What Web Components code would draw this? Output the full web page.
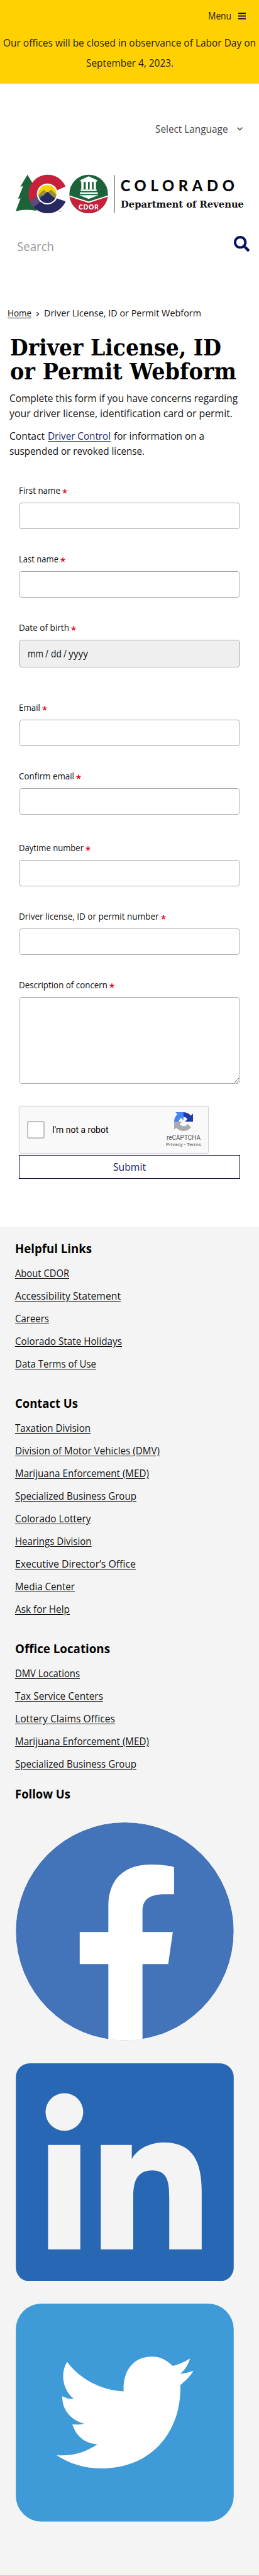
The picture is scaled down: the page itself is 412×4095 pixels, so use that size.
<!DOCTYPE html>
<html lang="en">
<head>
<meta charset="utf-8">
<title>Driver License, ID or Permit Webform</title>
<style>
body{margin:0;background:#fff;color:#111;font:16px/24px "Open Sans","Noto Sans",sans-serif}
main{display:block}
</style>
</head>
<body>
<site-banner></site-banner>
<site-header></site-header>
<main>
<page-intro></page-intro>
<contact-form></contact-form>
</main>
<site-footer>
<link-group heading="Helpful Links" width="122" links="About CDOR:86|Accessibility Statement:168|Careers:54|Colorado State Holidays:170|Data Terms of Use:129"></link-group>
<link-group heading="Contact Us" width="100" links="Taxation Division:120|Division of Motor Vehicles (DMV):230|Marijuana Enforcement (MED):213|Specialized Business Group:193|Colorado Lottery:120.5|Hearings Division:121.5|Executive Director’s Office:192|Media Center:95|Ask for Help:87"></link-group>
<link-group heading="Office Locations" width="151" links="DMV Locations:103|Tax Service Centers:140|Lottery Claims Offices:159|Marijuana Enforcement (MED):213|Specialized Business Group:193"></link-group>
<social-links></social-links>
</site-footer>
<script>
const define = (name, html) => customElements.define(name, class extends HTMLElement {
  constructor() { super(); this.attachShadow({mode: 'open'}).innerHTML = html; }
});

define('site-banner', `<style>
:host{display:block;box-sizing:border-box;height:133px;background:#ffd100;padding-top:13px;color:#2b1a14}
.menu{display:flex;justify-content:flex-end;align-items:center;gap:11px;padding-right:21px;height:24px;margin-bottom:15px}
.msg{display:flex;flex-direction:column;align-items:center;line-height:32px}
</style>
<div class="menu"><fit-text w="37">Menu</fit-text><svg width="12" height="11" viewBox="0 0 12 11"><path d="M0 1.2h12M0 5.5h12M0 9.8h12" stroke="#1b1440" stroke-width="1.9"/></svg></div>
<div class="msg"><fit-text w="402">Our offices will be closed in observance of Labor Day on</fit-text><fit-text w="139">September 4, 2023.</fit-text></div>`);

define('state-logo', `<style>:host{display:block;height:62px}svg{display:block}</style>
<svg width="364" height="62" viewBox="75 831 1092 186" role="img" aria-label="Colorado Department of Revenue">
<defs><clipPath id="c"><circle cx="228" cy="925" r="92"/></clipPath><clipPath id="i"><circle cx="226" cy="925" r="43"/></clipPath><clipPath id="d"><circle cx="423" cy="925" r="92"/></clipPath></defs>
<path d="M131 833L97 890l13-2-24 60 12-2-23 61q50-12 98-2l20-90-40-45z" fill="#1d6339"/>
<g clip-path="url(#c)"><path d="M130 830h200v190H130z" fill="#c8203a"/><path d="M150 1000l38-70 130 0v100H120z" fill="#272961"/><path d="M125 970l33-18 24-26 20 30-58 44z" fill="#5c4a7a"/></g>
<path d="M262 912L330 882V966L262 943z" fill="#fff"/>
<circle cx="226" cy="925" r="50" fill="#fff"/>
<g clip-path="url(#i)"><path d="M180 880h95v90h-95z" fill="#f8d100"/><path d="M176 935l33-30 16 15 18-16 34 30v40H176z" fill="#9b9137"/><path d="M176 948l20-17 13 8 17-20 22 18 28 8v30H176z" fill="#4b7082"/><path d="M186 950l41-36 39 36v25h-80z" fill="#272961"/></g>
<text x="279" y="1015" font-family="Lato,sans-serif" font-size="13" font-weight="700" textLength="17" lengthAdjust="spacingAndGlyphs" fill="#444">™</text>
<g clip-path="url(#d)"><path d="M330 830h190v190H330z" fill="#1d6339"/><path d="M330 935l93 31 93-31v85H330z" fill="#c8203a"/><path d="M328 934l95 30 95-30" fill="none" stroke="#fff" stroke-width="6"/></g>
<path d="M423 841l46 21h-8v6h-75v-6h-8zM388 868h11v35h-11zM409 868h11v35h-11zM428 868h11v35h-11zM447 868h11v35h-11zM385 904h76v7h-76zM381 917h86v8h-86zM378 931h92l-47 18z" fill="#fff"/>
<text x="375" y="998" font-family="Lato,sans-serif" font-size="31" font-weight="900" textLength="95" fill="#fff">CDOR</text>
<path d="M545.5 835v181" stroke="#888" stroke-width="5"/>
<text x="575" y="911" font-family="Lato,sans-serif" font-size="71" font-weight="900" textLength="544" fill="#080808">COLORADO</text>
<text x="576" y="990" font-family="'DejaVu Serif',serif" font-size="44" font-weight="700" textLength="588" lengthAdjust="spacingAndGlyphs" fill="#111">Department of Revenue</text>
</svg>`);

define('site-header', `<style>
:host{display:block;padding-top:60px}
.lang{display:flex;justify-content:flex-end;align-items:center;gap:15px;padding-right:26px;height:24px;color:#444;margin-bottom:60px}
state-logo{margin-left:25px}
.search{display:flex;justify-content:space-between;align-items:flex-start;margin-top:36px;padding:0 15px 0 27px;height:31px;font-size:20px;line-height:28px;color:#999}
fit-text.s{padding-top:3px}
</style>
<div class="lang"><fit-text w="115.500">Select Language</fit-text><svg width="9" height="6" viewBox="0 0 9 6"><path d="M.7.8l3.8 3.9L8.3.8" fill="none" stroke="#444" stroke-width="1.6"/></svg></div>
<state-logo></state-logo>
<div class="search"><fit-text class="s" w="59">Search</fit-text><svg width="25" height="25" viewBox="0 0 512 512"><path fill="#00125f" d="M505 442.700L405.300 343c-4.500-4.500-10.600-7-17-7H372c27.600-35.300 44-79.700 44-128C416 93.100 322.900 0 208 0S0 93.100 0 208s93.100 208 208 208c48.300 0 92.700-16.400 128-44v16.300c0 6.400 2.500 12.500 7 17l99.700 99.700c9.400 9.400 24.600 9.400 33.900 0l28.300-28.300c9.400-9.400 9.400-24.600.1-34zM208 336c-70.700 0-128-57.200-128-128 0-70.700 57.200-128 128-128 70.700 0 128 57.200 128 128 0 70.700-57.200 128-128 128z"/></svg></div>`);

define('page-intro', `<style>
:host{display:block;padding-top:80px}
nav{display:flex;padding-left:12px;height:24px;font-size:14.400px;gap:7px}
a{color:inherit;text-decoration:underline;text-underline-offset:1.500px}
h1{margin:24px 0 11px 16px;font:700 35.500px/38px "DejaVu Serif",serif;color:#000}
p{margin:0 0 12px 15px}
.row{display:flex;gap:5px}
.row a{color:#1b2a72}
</style>
<nav><fit-text w="38"><a>Home</a></fit-text><fit-text w="6">›</fit-text><fit-text w="250">Driver License, ID or Permit Webform</fit-text></nav>
<h1><fit-text w="336">Driver License, ID</fit-text><fit-text w="360">or Permit Webform</fit-text></h1>
<p><fit-text w="363">Complete this form if you have concerns regarding</fit-text><fit-text w="355">your driver license, identification card or permit.</fit-text></p>
<p><span class="row"><fit-text w="56">Contact</fit-text><fit-text w="100"><a>Driver Control</a></fit-text><fit-text w="144">for information on a</fit-text></span><fit-text w="215">suspended or revoked license.</fit-text></p>`);

customElements.define('form-field', class extends HTMLElement {
  connectedCallback() {
    if (this.shadowRoot) return;
    const kind = this.getAttribute('kind');
    const control = kind === 'date'
      ? '<div class="box date"><fit-text w="25">mm</fit-text><fit-text w="5">/</fit-text><fit-text w="17">dd</fit-text><fit-text w="5">/</fit-text><fit-text w="31">yyyy</fit-text></div>'
      : kind === 'area' ? '<textarea class="box area"></textarea>' : '<input class="box">';
    this.attachShadow({mode: 'open'}).innerHTML = `<style>
:host{display:block}
.label{display:flex;align-items:center;gap:3px;height:20px;margin-bottom:9px;font-size:14.400px;line-height:20px;color:#111}
.box{display:block;box-sizing:border-box;width:352px;height:42px;margin:0;padding:0 13px;border:1px solid #a9a9a9;border-radius:5px;background:#fff;outline:0}
.date{display:flex;align-items:center;gap:3.300px;height:44px;background:#efefef;font-size:16px}
.area{height:138px}
</style><div class="label"><fit-text w="${this.getAttribute('w')}">${this.getAttribute('label')}</fit-text><svg width="8" height="8" viewBox="0 0 8 8" style="margin-top:2px"><path d="M4 4V.2M4 4L.4 2.900M4 4l3.600-1.100M4 4L1.800 7.200M4 4l2.200 3.200" stroke="#e01020" stroke-width="1.500"/></svg></div>${control}`;
  }
});

define('captcha-box', `<style>
:host{display:flex;box-sizing:border-box;width:302px;height:76px;border:1px solid #d3d3d8;border-radius:3px;background:#f9f9f9;box-shadow:0 0 3px rgba(0,0,0,.08);align-items:center;font-family:Roboto,sans-serif}
.check{box-sizing:border-box;width:28px;height:28px;border:2px solid #c1c1c1;border-radius:2px;background:#fff;margin:0 12px}
.t{font-size:14px;flex:1;color:#000}
.brand{display:flex;flex-direction:column;align-items:center;width:56px;margin-right:11px;color:#555;font-size:10px;line-height:12px}
.brand svg{margin-bottom:5px}
.small{font-size:8px;line-height:10px}
</style>
<div class="check"></div><div class="t"><fit-text w="89.500">I'm not a robot</fit-text></div>
<div class="brand"><svg width="30" height="30" viewBox="0 0 64 64"><path fill="#1c3aa9" d="M64 31.955l-.033-1.370V4.687l-7.160 7.160C50.948 4.674 42.033.093 32.050.093c-10.400 0-19.622 4.960-25.458 12.640l11.736 11.860a15.550 15.550 0 0 1 4.754-5.334c2.050-1.600 4.952-2.906 8.968-2.906.485 0 .860.057 1.135.163 4.976.393 9.288 3.140 11.828 7.124l-8.307 8.307L64 31.953"/><path fill="#4285f4" d="M31.862.094l-1.370.033H4.594l7.160 7.160C4.580 13.147 0 22.060 0 32.046c0 10.400 4.960 19.622 12.640 25.458L24.500 45.768a15.550 15.550 0 0 1-5.334-4.754c-1.600-2.050-2.906-4.952-2.906-8.968 0-.485.057-.860.163-1.135.393-4.976 3.140-9.288 7.124-11.828l8.307 8.307L31.860.095"/><path fill="#ababab" d="M.001 32.045l.033 1.370v25.898l7.160-7.160c5.860 7.173 14.774 11.754 24.760 11.754 10.400 0 19.622-4.960 25.458-12.640l-11.736-11.860a15.550 15.550 0 0 1-4.754 5.334c-2.050 1.600-4.952 2.906-8.968 2.906-.485 0-.860-.057-1.135-.163-4.976-.393-9.288-3.140-11.828-7.124l8.307-8.307c-10.522.040-22.400.066-27.295-.005"/></svg><fit-text w="54">reCAPTCHA</fit-text><fit-text class="small" w="56">Privacy - Terms</fit-text></div>`);

define('contact-form', `<style>
:host{display:flex;flex-direction:column;gap:38px;padding:29px 30px 0}
.e{margin-top:16px}.n{margin-top:5px}
.end{margin-top:-3px;height:192px}
button{display:flex;justify-content:center;align-items:center;box-sizing:border-box;width:352px;height:38px;margin:2px 0 0;padding:0;border:1px solid #0b0838;background:#fff;color:#19195f;font:16.500px/24px "Open Sans",sans-serif}
</style>
<form-field label="First name" w="66"></form-field>
<form-field label="Last name" w="63"></form-field>
<form-field label="Date of birth" w="80" kind="date"></form-field>
<form-field class="e" label="Email" w="34"></form-field>
<form-field label="Confirm email" w="88"></form-field>
<form-field class="n" label="Daytime number" w="103"></form-field>
<form-field label="Driver license, ID or permit number" w="222.500"></form-field>
<form-field label="Description of concern" w="141" kind="area"></form-field>
<div class="end"><captcha-box></captcha-box><button type="button"><fit-text w="52">Submit</fit-text></button></div>`);

customElements.define('link-group', class extends HTMLElement {
  connectedCallback() {
    if (this.shadowRoot) return;
    const items = this.getAttribute('links').split('|').map(s => s.split(':'));
    this.attachShadow({mode: 'open'}).innerHTML = `<style>
:host{display:block;margin-bottom:31px}
h2{margin:0 0 7px;font-size:19.200px;line-height:28px;font-weight:700;color:#000}
ul{list-style:none;margin:0;padding:0;line-height:36px}
a{color:#111;text-decoration:underline;text-underline-offset:1.500px}
li{height:36px}
</style><h2><fit-text w="${this.getAttribute('width')}">${this.getAttribute('heading')}</fit-text></h2>
<ul>${items.map(([t, w]) => `<li><fit-text w="${w}"><a>${t}</a></fit-text></li>`).join('')}</ul>`;
  }
});

define('social-links', `<style>
:host{display:block;margin-top:-15px}
h2{margin:0 0 31px;font-size:19.200px;line-height:28px;font-weight:700;color:#000}
.icons{display:grid;gap:36px;padding-left:1px}
svg{display:block;width:347px;height:346.600px}
</style><h2><fit-text w="88">Follow Us</fit-text></h2>
<div class="icons">
<svg viewBox="0 0 347 347"><defs><clipPath id="f"><circle cx="173.500" cy="173.500" r="173.500"/></clipPath></defs><g clip-path="url(#f)"><circle cx="173.500" cy="173.500" r="173.500" fill="#4373b8"/><path fill="#fff" d="M252 71V114.500H236C213 114.500 201.700 123 201.700 141V174.500H250L242.700 225.500H201.700V347H147.300V225.500H101.700V174.500H147.300V134C147.300 88 175 67 215 67 229 67 242 68.500 252 71z"/></g></svg>
<svg viewBox="0 0 347 347"><rect width="347" height="347" rx="22" fill="#2867b4"/><circle cx="77.300" cy="77.500" r="30" fill="#f4f4f4"/><path fill="#f4f4f4" d="M51.300 130H102.700V296H51.300zM135.300 130H184.700V152.500C192 138 211 126 235 126 283 126 296 158 296 205V296H244.300V215C244.300 192 243 170.400 217.300 170.400 191 170.400 187 191 187 213V296H135.300z"/></svg>
<svg viewBox="0 0 347 347"><rect width="347" height="347" rx="41" fill="#3e9bd8"/><path fill="#fff" transform="scale(.33333) translate(-75 -126)" d="M320 404C380 485 480 540 590 545 585 460 625 380 725 379 765 379 795 395 824 423 850 418 880 405 907 388 900 415 885 440 860 462 880 460 902 455 923 447 908 475 885 495 861 515 868 720 740 912 480 913 400 912 330 890 270 850 345 855 410 835 465 797 410 795 365 765 345 702 365 705 385 704 400 699 335 680 295 630 297 568 315 578 335 582 352 581 300 540 285 460 320 404z"/></svg>
</div>`);

define('site-footer', `<style>
:host{display:block;box-sizing:border-box;height:2145px;padding:21px 24px 0;background:#f4f4f4;border-bottom:1px solid #ffd100}
</style><slot></slot>`);

/* Keeps one line of text at a set width by condensing or widening the glyphs. */
customElements.define('fit-text', class extends HTMLElement {
  connectedCallback() {
    if (this.shadowRoot) return;
    this.attachShadow({mode: 'open'}).innerHTML = '<style>:host{display:block;white-space:nowrap}span{display:inline-block;vertical-align:top;transform-origin:0 50%}</style><span><slot></slot></span>';
    const span = this.shadowRoot.querySelector('span');
    const w = parseFloat(this.getAttribute('w'));
    const natural = span.getBoundingClientRect().width;
    this.style.width = w + 'px';
    if (natural) span.style.transform = `scaleX(${w / natural})`;
  }
});
</script>
</body>
</html>
